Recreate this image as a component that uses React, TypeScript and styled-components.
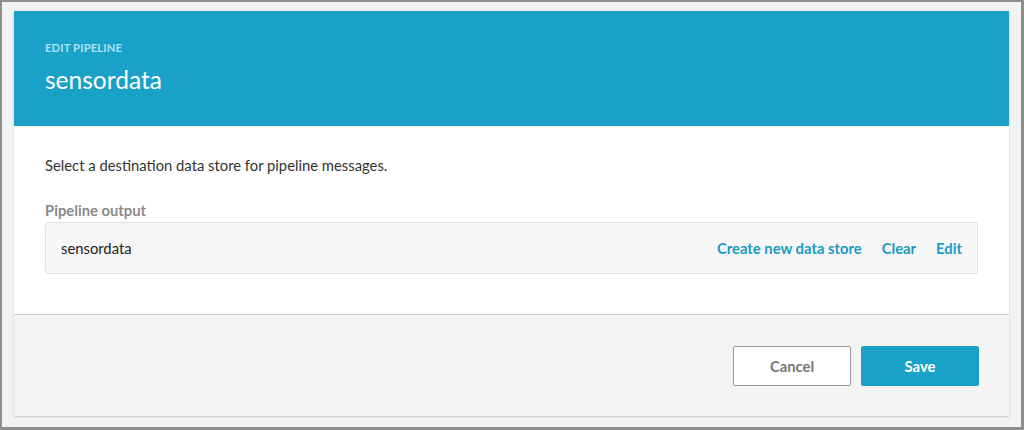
import React from "react";
import styled, { createGlobalStyle } from "styled-components";

const Global = createGlobalStyle`
  html, body { margin: 0; padding: 0; background: #f2f2f2; }
  body { font-family: Lato, "Liberation Sans", sans-serif; }
  * { box-sizing: border-box; }
`;

const Frame = styled.div`
  width: 1024px;
  height: 430px;
  border: 2px solid #8e8e8e;
  border-right-width: 3px;
  border-bottom-width: 3px;
  background: #f2f2f2;
  padding: 9px 12px 0 12px;
`;

const Card = styled.div`
  width: 995px;
  height: 405px;
  background: #fff;
  box-shadow: 0 1px 2px rgba(0, 0, 0, 0.18);
  display: flex;
  flex-direction: column;
`;

const Header = styled.header`
  background: #1aa1c7;
  height: 115px;
  padding: 30px 31px 0;
  display: flex;
  flex-direction: column;
`;

const Eyebrow = styled.div`
  color: #a5e3f6;
  font-size: 11.3px;
  font-weight: 700;
  letter-spacing: 0.1px;
  line-height: 14px;
`;

const Title = styled.h1`
  margin: 10px 0 0;
  color: #fff;
  font-size: 24.5px;
  font-weight: 400;
  line-height: 30px;
`;

const Body = styled.section`
  flex: 0 0 189px;
  padding: 30px 31px 0;
  border-bottom: 1px solid #cfcfcf;
`;

const Intro = styled.p`
  margin: 0;
  color: #333;
  font-size: 14.8px;
  line-height: 18px;
`;

const Label = styled.div`
  margin-top: 27px;
  color: #8a8a8a;
  font-size: 14.8px;
  font-weight: 700;
  line-height: 18px;
`;

const OutputBox = styled.div`
  margin-top: 3px;
  height: 52px;
  background: #f7f7f7;
  border: 1px solid #e2e2e2;
  border-radius: 3px;
  display: flex;
  align-items: center;
  padding: 0 15px 0 15px;
`;

const Value = styled.span`
  flex: 1;
  color: #222;
  font-size: 14.8px;
`;

const Links = styled.div`
  display: flex;
  gap: 20px;
`;

const LinkBtn = styled.a`
  color: #1a9bc4;
  font-size: 14.8px;
  font-weight: 700;
  cursor: pointer;
`;

const Footer = styled.footer`
  flex: 1;
  background: #f4f4f4;
  display: flex;
  justify-content: flex-end;
  align-items: flex-start;
  gap: 10px;
  padding: 31px 30px 0 0;
`;

const Button = styled.button<{ $primary?: boolean }>`
  width: 118px;
  height: 40px;
  border-radius: 2px;
  font-family: inherit;
  font-size: 14.8px;
  font-weight: 700;
  cursor: pointer;
  border: 1px solid ${(p) => (p.$primary ? "#1aa1c7" : "#9a9a9a")};
  background: ${(p) => (p.$primary ? "#1aa1c7" : "#fff")};
  color: ${(p) => (p.$primary ? "#fff" : "#777")};
`;

export default function App() {
  return (
    <>
      <Global />
      <Frame>
        <Card>
          <Header>
            <Eyebrow>EDIT PIPELINE</Eyebrow>
            <Title>sensordata</Title>
          </Header>
          <Body>
            <Intro>Select a destination data store for pipeline messages.</Intro>
            <Label>Pipeline output</Label>
            <OutputBox>
              <Value>sensordata</Value>
              <Links>
                <LinkBtn>Create new data store</LinkBtn>
                <LinkBtn>Clear</LinkBtn>
                <LinkBtn>Edit</LinkBtn>
              </Links>
            </OutputBox>
          </Body>
          <Footer>
            <Button>Cancel</Button>
            <Button $primary>Save</Button>
          </Footer>
        </Card>
      </Frame>
    </>
  );
}
